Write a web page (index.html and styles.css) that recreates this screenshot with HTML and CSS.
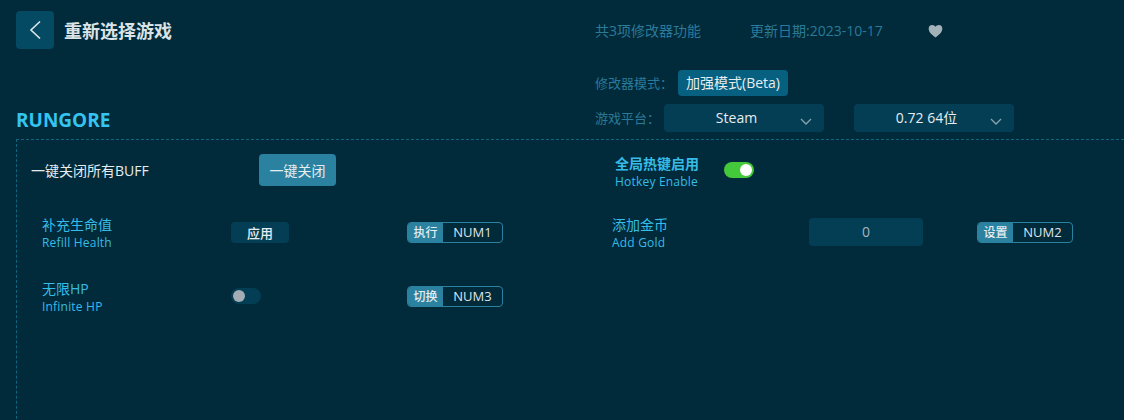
FILE: index.html
```html
<!DOCTYPE html>
<html lang="zh-CN">
<head>
    <meta charset="UTF-8">
    <meta name="viewport" content="width=device-width, initial-scale=1.0">
    <title>RUNGORE</title>
    <link rel="stylesheet" href="styles.css">
</head>
<body>

    <!-- Header -->
    <header class="header">
        <div class="header-left">
            <div class="back-row">
                <a class="back-btn" href="#">
                    <svg width="14" height="20" viewBox="0 0 14 20"><path d="M12 1.5 3 10l9 8.5" fill="none" stroke="#dfe8ec" stroke-width="1.6"/></svg>
                </a>
                <h1 class="page-title">重新选择游戏</h1>
            </div>
            <h2 class="game-name">RUNGORE</h2>
        </div>
        <div class="header-right">
            <div class="info-row">
                <span class="info-count">共3项修改器功能</span>
                <span class="info-date">更新日期:2023-10-17</span>
                <svg class="heart" width="15" height="14" viewBox="0 0 16 15"><path d="M8 14.5C3 10.5.7 8.2.7 5A3.9 3.9 0 0 1 4.500 1C6 1 7.300 1.800 8 3c.7-1.200 2-2 3.500-2a3.900 3.900 0 0 1 3.800 4c0 3.200-2.300 5.500-7.300 9.500z" fill="#a3b1b9"/></svg>
            </div>
            <div class="mode-row">
                <span class="field-label">修改器模式：</span>
                <span class="mode-pill">加强模式(Beta)</span>
            </div>
            <div class="platform-row">
                <span class="field-label platform-label">游戏平台：</span>
                <div class="select">Steam
                    <svg class="caret" width="12" height="7" viewBox="0 0 12 7"><path d="M1 1l5 5 5-5" fill="none" stroke="#8da3ae" stroke-width="1.300"/></svg>
                </div>
                <div class="select">0.72 64位
                    <svg class="caret" width="12" height="7" viewBox="0 0 12 7"><path d="M1 1l5 5 5-5" fill="none" stroke="#8da3ae" stroke-width="1.300"/></svg>
                </div>
            </div>
        </div>
    </header>

    <!-- Cheat list -->
    <section class="panel">
        <div class="global-row">
            <span class="close-all-label">一键关闭所有BUFF</span>
            <button class="close-all-btn">一键关闭</button>
            <div class="label hotkey-label">
                <strong class="label-cn">全局热键启用</strong>
                <span class="label-en">Hotkey Enable</span>
            </div>
            <span class="toggle toggle-on"><i></i></span>
        </div>

        <div class="cheat-grid">
            <div class="label">
                <span class="label-cn">补充生命值</span>
                <span class="label-en">Refill Health</span>
            </div>
            <button class="apply-btn">应用</button>
            <div class="key-tag"><span class="key-action">执行</span><span class="key-name">NUM1</span></div>
            <div class="label">
                <span class="label-cn">添加金币</span>
                <span class="label-en">Add Gold</span>
            </div>
            <div class="num-input">0</div>
            <div class="key-tag"><span class="key-action">设置</span><span class="key-name">NUM2</span></div>

            <div class="label">
                <span class="label-cn">无限HP</span>
                <span class="label-en">Infinite HP</span>
            </div>
            <span class="toggle"><i></i></span>
            <div class="key-tag"><span class="key-action">切换</span><span class="key-name">NUM3</span></div>
        </div>
    </section>

</body>
</html>
```

FILE: styles.css
```css
* { box-sizing: border-box; }
html, body { height: 100%; }
body { margin: 0; background: #012a3a; color: #e6edf0; overflow: hidden; font-family: "Open Sans", "Noto Sans CJK SC", sans-serif; font-size: 14px; }

/* Header */
.header { display: flex; height: 139px; padding-left: 16px; }
.header-left { width: 579px; display: flex; flex-direction: column; justify-content: space-between; padding-top: 11px; }
.back-row { display: flex; align-items: center; gap: 10px; }
.back-btn { width: 38px; height: 38px; background: #044a63; border-radius: 4px; display: flex; align-items: center; justify-content: center; }
.page-title { margin: 0; font-size: 18px; font-weight: 700; color: #dbe3e7; }
.game-name { margin: 0 0 6px; font-size: 19px; line-height: 26px; font-weight: 700; color: #35c4f0; }

.header-right { padding-top: 19px; color: #2a7a99; }
.info-row { display: flex; align-items: center; height: 22px; }
.info-count { width: 155px; }
.info-date { width: 178px; }
.heart { margin-top: 1px; }
.mode-row { display: flex; align-items: center; margin-top: 29px; height: 26px; }
.field-label { font-size: 13px; width: 83px; margin-bottom: 2px; color: #2a7a99; }
.mode-pill { background: #07607f; color: #e6edf0; border-radius: 4px; padding: 0 8px; height: 26px; line-height: 26px; }
.platform-row { display: flex; align-items: center; margin-top: 8px; }
.platform-label { width: 69px; }
.select { position: relative; width: 160px; height: 28px; line-height: 28px; margin-right: 30px; background: #043e55; border-radius: 4px; text-align: center; padding-right: 15px; color: #e6edf0; }
.caret { position: absolute; right: 12px; top: 14px; }

/* Panel */
.panel { margin-left: 16px; margin-right: -10px; height: 300px; border-top: 1px dashed #0f6580; border-left: 1px dashed #0f6580; }
.global-row { display: grid; grid-template-columns: 228px 356px 109px 30px; grid-template-rows: 32px; align-items: center; padding: 14px 0 0 14px; height: 46px; }
.close-all-label { color: #e6edf0; }
.close-all-btn { width: 77px; height: 32px; background: #2a82a0; color: #e6edf0; border: none; border-radius: 4px; padding: 0; font: inherit; }
.label { display: flex; flex-direction: column; color: #35bce8; }
.label-cn { font-size: 14px; line-height: 19px; }
.label-en { font-size: 12px; line-height: 17px; letter-spacing: .2px; }
.hotkey-label { padding-top: 4px; }
.cheat-grid .label { padding-top: 2px; }

.cheat-grid { display: grid; grid-template-columns: 189px 176px 205px 197px 168px 96px; grid-auto-rows: 36px; row-gap: 28px; align-items: center; padding: 28px 0 0 25px; }
.apply-btn { width: 58px; height: 21px; background: #043e55; color: #e6edf0; border: none; border-radius: 4px; padding: 0; font: inherit; font-size: 13px; font-weight: 500; }
.num-input { width: 114px; height: 28px; line-height: 28px; background: #043e55; border-radius: 4px; text-align: center; color: #a3b5bd; }
.key-tag { display: flex; width: 96px; height: 21px; border: 1px solid #2a82a0; border-radius: 4px; overflow: hidden; font-size: 12px; line-height: 19px; }
.key-action { width: 35px; background: #2a82a0; text-align: center; font-weight: 500; }
.key-name { flex: 1; text-align: center; font-size: 13px; font-weight: 500; color: #dfe6ea; }

/* Toggle */
.toggle { position: relative; display: block; width: 30px; height: 16px; border-radius: 8px; background: #043e55; }
.toggle i { position: absolute; left: 2px; top: 2px; width: 12px; height: 12px; border-radius: 50%; background: #a3adb3; }
.toggle-on { background: #43c93a; }
.toggle-on i { left: 16px; background: #fff; }
```
